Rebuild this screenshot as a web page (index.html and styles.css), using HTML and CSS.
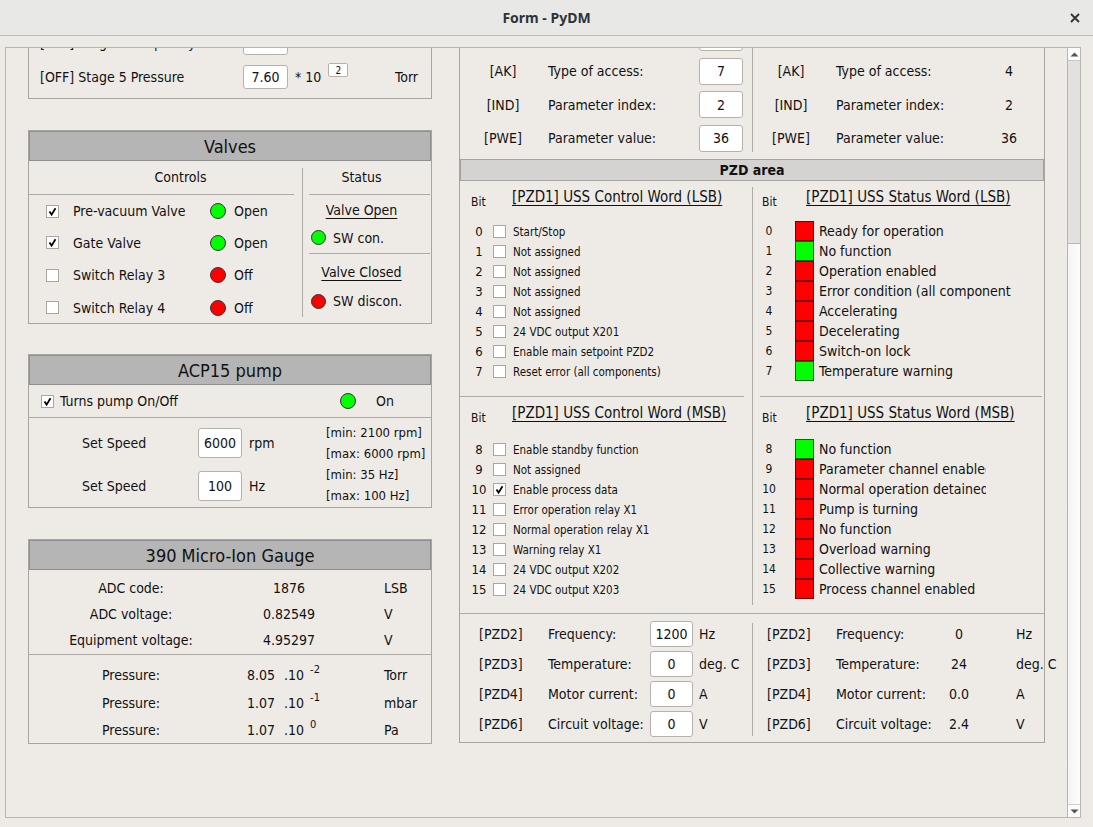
FILE: index.html
```html
<!DOCTYPE html>
<html>
<head>
<meta charset="utf-8">
<title>Form - PyDM</title>
<link rel="stylesheet" href="styles.css">
</head>
<body>
<div class="window">
  <header class="titlebar">
    <span></span>
    <span class="title">Form - PyDM</span>
    <span class="close"><svg width="10" height="10" viewBox="0 0 10 10"><path d="M1 1 L9 9 M9 1 L1 9" stroke="#2e3436" stroke-width="1.8" fill="none"/></svg></span>
  </header>
  <div class="wbody">
    <div class="scrollarea">
      <div class="viewport">
        <div class="content">
          <!-- LEFT COLUMN -->
          <div class="col-left">
            <div class="box stage">
              <div class="stage-row"><span class="st-lbl">[OFF] Stage 5 Frequency</span><span class="input st-in">500</span><span class="st-mult"></span><span class="st-unit">Hz</span></div>
              <div class="stage-row"><span class="st-lbl">[OFF] Stage 5 Pressure</span><span class="input st-in">7.60</span><span class="st-mult">* 10 <span class="exp">2</span></span><span class="st-unit">Torr</span></div>
            </div>

            <div class="box valves">
              <div class="ghead">Valves</div>
              <div class="valves-body">
                <div class="controls">
                  <div class="subhead sub-controls">Controls</div>
                  <div class="hr hr-controls"></div>
                  <div class="vgrid">
                    <span class="cb"><svg width="11" height="11" viewBox="0 0 11 11"><path d="M2.5 5.5 L4.6 8.6 L8.5 2.2" stroke="#000" stroke-width="1.8" fill="none"/></svg></span><span class="vlabel">Pre-vacuum Valve</span><span class="led green"></span><span class="vstate">Open</span>
                    <span class="cb"><svg width="11" height="11" viewBox="0 0 11 11"><path d="M2.5 5.5 L4.6 8.6 L8.5 2.2" stroke="#000" stroke-width="1.8" fill="none"/></svg></span><span class="vlabel">Gate Valve</span><span class="led green"></span><span class="vstate">Open</span>
                    <span class="cb"></span><span class="vlabel">Switch Relay 3</span><span class="led red"></span><span class="vstate">Off</span>
                    <span class="cb"></span><span class="vlabel">Switch Relay 4</span><span class="led red"></span><span class="vstate">Off</span>
                  </div>
                </div>
                <div class="vsep vsep-valves"></div>
                <div class="status">
                  <div class="subhead sub-status">Status</div>
                  <div class="hr hr-status"></div>
                  <div class="st-title st-open"><u>Valve Open</u></div>
                  <div class="st-led st-led1"><span class="led small green"></span><span>SW con.</span></div>
                  <div class="hr hr-status"></div>
                  <div class="st-title st-closed"><u>Valve Closed</u></div>
                  <div class="st-led st-led2"><span class="led small red"></span><span>SW discon.</span></div>
                </div>
              </div>
            </div>

            <div class="box acp">
              <div class="ghead">ACP15 pump</div>
              <div class="acp-top">
                <span class="cb"><svg width="11" height="11" viewBox="0 0 11 11"><path d="M2.5 5.5 L4.6 8.6 L8.5 2.2" stroke="#000" stroke-width="1.8" fill="none"/></svg></span>
                <span class="acp-lbl">Turns pump On/Off</span>
                <span class="led green"></span>
                <span class="acp-on">On</span>
              </div>
              <div class="hr"></div>
              <div class="acp-speed">
                <div class="speed-grid">
                  <span class="sp-lbl">Set Speed</span><span class="input sp-in">6000</span><span class="sp-unit">rpm</span>
                  <span class="sp-lbl">Set Speed</span><span class="input sp-in">100</span><span class="sp-unit">Hz</span>
                </div>
                <div class="limits">
                  <div>[min: 2100 rpm]</div>
                  <div>[max: 6000 rpm]</div>
                  <div>[min: 35 Hz]</div>
                  <div>[max: 100 Hz]</div>
                </div>
              </div>
            </div>

            <div class="box gauge">
              <div class="ghead">390 Micro-Ion Gauge</div>
              <div class="g-rows g-top">
                <span class="g-lbl">ADC code:</span><span class="g-val">1876</span><span class="g-unit">LSB</span>
                <span class="g-lbl">ADC voltage:</span><span class="g-val">0.82549</span><span class="g-unit">V</span>
                <span class="g-lbl">Equipment voltage:</span><span class="g-val">4.95297</span><span class="g-unit">V</span>
              </div>
              <div class="hr"></div>
              <div class="g-rows g-press">
                <span class="g-lbl">Pressure:</span><span class="g-pv"><span>8.05</span><span class="dot10">.10</span><span class="sup">-2</span></span><span class="g-unit">Torr</span>
                <span class="g-lbl">Pressure:</span><span class="g-pv"><span>1.07</span><span class="dot10">.10</span><span class="sup">-1</span></span><span class="g-unit">mbar</span>
                <span class="g-lbl">Pressure:</span><span class="g-pv"><span>1.07</span><span class="dot10">.10</span><span class="sup">0</span></span><span class="g-unit">Pa</span>
              </div>
            </div>
          </div>

          <!-- RIGHT COLUMN -->
          <div class="col-right">
            <div class="box rbox">
              <div class="params">
                <div class="phalf pleft">
                  <span class="p-tag">[PNU]</span><span class="p-lbl">Parameter number:</span><span class="input p-in">1</span>
                  <span class="p-tag">[AK]</span><span class="p-lbl">Type of access:</span><span class="input p-in">7</span>
                  <span class="p-tag">[IND]</span><span class="p-lbl">Parameter index:</span><span class="input p-in">2</span>
                  <span class="p-tag">[PWE]</span><span class="p-lbl">Parameter value:</span><span class="input p-in">36</span>
                </div>
                <div class="vsep psep"></div>
                <div class="phalf pright">
                  <span class="p-tag">[PNU]</span><span class="p-lbl">Parameter number:</span><span class="p-val">1</span>
                  <span class="p-tag">[AK]</span><span class="p-lbl">Type of access:</span><span class="p-val">4</span>
                  <span class="p-tag">[IND]</span><span class="p-lbl">Parameter index:</span><span class="p-val">2</span>
                  <span class="p-tag">[PWE]</span><span class="p-lbl">Parameter value:</span><span class="p-val">36</span>
                </div>
              </div>

              <div class="pzd-head">PZD area</div>

              <div class="pzd-body">
                <div class="pzd-half pzd-left">
                  <div class="pzd-sec sec-lsb">
                    <div class="pzd-h"><span class="bit">Bit</span><span class="pzd-title">[PZD1] USS Control Word (LSB)</span></div>
                    <div class="crow"><span class="cn">0</span><span class="cb"></span><span class="cl">Start/Stop</span></div>
                    <div class="crow"><span class="cn">1</span><span class="cb"></span><span class="cl">Not assigned</span></div>
                    <div class="crow"><span class="cn">2</span><span class="cb"></span><span class="cl">Not assigned</span></div>
                    <div class="crow"><span class="cn">3</span><span class="cb"></span><span class="cl">Not assigned</span></div>
                    <div class="crow"><span class="cn">4</span><span class="cb"></span><span class="cl">Not assigned</span></div>
                    <div class="crow"><span class="cn">5</span><span class="cb"></span><span class="cl">24 VDC output X201</span></div>
                    <div class="crow"><span class="cn">6</span><span class="cb"></span><span class="cl">Enable main setpoint PZD2</span></div>
                    <div class="crow"><span class="cn">7</span><span class="cb"></span><span class="cl">Reset error (all components)</span></div>
                  </div>
                  <div class="hr hr-pl"></div>
                  <div class="pzd-sec sec-msb">
                    <div class="pzd-h"><span class="bit">Bit</span><span class="pzd-title">[PZD1] USS Control Word (MSB)</span></div>
                    <div class="crow"><span class="cn">8</span><span class="cb"></span><span class="cl">Enable standby function</span></div>
                    <div class="crow"><span class="cn">9</span><span class="cb"></span><span class="cl">Not assigned</span></div>
                    <div class="crow"><span class="cn">10</span><span class="cb"><svg width="11" height="11" viewBox="0 0 11 11"><path d="M2.5 5.5 L4.6 8.6 L8.5 2.2" stroke="#000" stroke-width="1.8" fill="none"/></svg></span><span class="cl">Enable process data</span></div>
                    <div class="crow"><span class="cn">11</span><span class="cb"></span><span class="cl">Error operation relay X1</span></div>
                    <div class="crow"><span class="cn">12</span><span class="cb"></span><span class="cl">Normal operation relay X1</span></div>
                    <div class="crow"><span class="cn">13</span><span class="cb"></span><span class="cl">Warning relay X1</span></div>
                    <div class="crow"><span class="cn">14</span><span class="cb"></span><span class="cl">24 VDC output X202</span></div>
                    <div class="crow"><span class="cn">15</span><span class="cb"></span><span class="cl">24 VDC output X203</span></div>
                  </div>
                </div>
                <div class="vsep pzd-sep"></div>
                <div class="pzd-half pzd-right">
                  <div class="pzd-sec sec-lsb">
                    <div class="pzd-h"><span class="bit">Bit</span><span class="pzd-title">[PZD1] USS Status Word (LSB)</span></div>
                    <div class="srow"><span class="sn">0</span><span class="sq red"></span><span class="sl">Ready for operation</span></div>
                    <div class="srow"><span class="sn">1</span><span class="sq green"></span><span class="sl">No function</span></div>
                    <div class="srow"><span class="sn">2</span><span class="sq red"></span><span class="sl">Operation enabled</span></div>
                    <div class="srow"><span class="sn">3</span><span class="sq red"></span><span class="sl">Error condition (all components)</span></div>
                    <div class="srow"><span class="sn">4</span><span class="sq red"></span><span class="sl">Accelerating</span></div>
                    <div class="srow"><span class="sn">5</span><span class="sq red"></span><span class="sl">Decelerating</span></div>
                    <div class="srow"><span class="sn">6</span><span class="sq red"></span><span class="sl">Switch-on lock</span></div>
                    <div class="srow"><span class="sn">7</span><span class="sq green"></span><span class="sl">Temperature warning</span></div>
                  </div>
                  <div class="hr hr-pr"></div>
                  <div class="pzd-sec sec-msb">
                    <div class="pzd-h"><span class="bit">Bit</span><span class="pzd-title">[PZD1] USS Status Word (MSB)</span></div>
                    <div class="srow msb"><span class="sn">8</span><span class="sq green"></span><span class="sl">No function</span></div>
                    <div class="srow msb"><span class="sn">9</span><span class="sq red"></span><span class="sl">Parameter channel enabled</span></div>
                    <div class="srow msb"><span class="sn">10</span><span class="sq red"></span><span class="sl">Normal operation detained</span></div>
                    <div class="srow msb"><span class="sn">11</span><span class="sq red"></span><span class="sl">Pump is turning</span></div>
                    <div class="srow msb"><span class="sn">12</span><span class="sq red"></span><span class="sl">No function</span></div>
                    <div class="srow msb"><span class="sn">13</span><span class="sq red"></span><span class="sl">Overload warning</span></div>
                    <div class="srow msb"><span class="sn">14</span><span class="sq red"></span><span class="sl">Collective warning</span></div>
                    <div class="srow msb"><span class="sn">15</span><span class="sq red"></span><span class="sl">Process channel enabled</span></div>
                  </div>
                </div>
              </div>

              <div class="hr"></div>

              <div class="pzd-bottom">
                <div class="pb-half pb-left">
                  <span class="pb-tag">[PZD2]</span><span class="pb-lbl">Frequency:</span><span class="input pb-in">1200</span><span class="pb-unit">Hz</span>
                  <span class="pb-tag">[PZD3]</span><span class="pb-lbl">Temperature:</span><span class="input pb-in">0</span><span class="pb-unit">deg. C</span>
                  <span class="pb-tag">[PZD4]</span><span class="pb-lbl">Motor current:</span><span class="input pb-in">0</span><span class="pb-unit">A</span>
                  <span class="pb-tag">[PZD6]</span><span class="pb-lbl">Circuit voltage:</span><span class="input pb-in">0</span><span class="pb-unit">V</span>
                </div>
                <div class="vsep pb-sep"></div>
                <div class="pb-half pb-right">
                  <span class="pb-tag">[PZD2]</span><span class="pb-lbl">Frequency:</span><span class="pb-val">0</span><span class="pb-unit">Hz</span>
                  <span class="pb-tag">[PZD3]</span><span class="pb-lbl">Temperature:</span><span class="pb-val">24</span><span class="pb-unit">deg. C</span>
                  <span class="pb-tag">[PZD4]</span><span class="pb-lbl">Motor current:</span><span class="pb-val">0.0</span><span class="pb-unit">A</span>
                  <span class="pb-tag">[PZD6]</span><span class="pb-lbl">Circuit voltage:</span><span class="pb-val">2.4</span><span class="pb-unit">V</span>
                </div>
              </div>
            </div>
          </div>
        </div>
      </div>
      <div class="vscroll">
        <div class="sb-btn"><svg width="9" height="5" viewBox="0 0 9 5"><path d="M0.5 4.5 L4.5 0.5 L8.5 4.5 Z" fill="#555"/></svg></div>
        <div class="sb-trough">
          <div class="sb-handle"></div>
        </div>
        <div class="sb-btn sb-down"><svg width="9" height="5" viewBox="0 0 9 5"><path d="M0.5 0.5 L4.5 4.5 L8.5 0.5 Z" fill="#555"/></svg></div>
      </div>
    </div>
  </div>
</div>
</body>
</html>
```

FILE: styles.css
```css
* { box-sizing: border-box; }
html, body { margin: 0; padding: 0; }
body {
  width: 1093px;
  height: 827px;
  overflow: hidden;
  background: #eeebe7;
  font-family: "DejaVu Sans Condensed", "DejaVu Sans", sans-serif;
  font-size: 14px;
  color: #111;
}
.window { width: 1093px; height: 827px; display: flex; flex-direction: column; }

/* title bar */
.titlebar {
  height: 36px;
  flex: none;
  background: #e8e8e7;
  border-bottom: 1px solid #bdbcb9;
  display: grid;
  grid-template-columns: 1fr auto 1fr;
  align-items: center;
}
.title { font-family: "Noto Sans", sans-serif; font-weight: bold; font-size: 14px; color: #2e3436; }
.close { justify-self: end; margin-right: 13px; display: flex; }

.wbody { flex: 1; padding: 11px 12px 9px 5px; }
.scrollarea {
  height: 771px;
  border: 1px solid #b9b6b1;
  display: flex;
}
.viewport { flex: 1; overflow: hidden; }
.content {
  display: flex;
  align-items: flex-start;
  gap: 27px;
  padding-left: 22px;
  margin-top: -29px;
}

/* scrollbar */
.vscroll { width: 13px; flex: none; display: flex; flex-direction: column; border-left: 1px solid #b5b5b5; background: #fafafa; }
.sb-btn { height: 13px; display: flex; align-items: center; justify-content: center; background: #fbfbfb; border-bottom: 1px solid #c8c8c8; }
.sb-down { border-bottom: none; border-top: 1px solid #d0d0d0; }
.sb-trough { flex: 1; background: linear-gradient(to right, #f4f4f4, #fdfdfd); }
.sb-handle { height: 183px; background: #e2e1df; border-bottom: 1px solid #b8b8b8; }

/* generic */
.box { border: 1px solid #a8a5a1; }
.hr { height: 1px; background: #aeaba7; }
.vsep { width: 1px; background: #aeaba7; flex: none; }
.input {
  background: #fff;
  border: 1px solid #b5b2ad;
  border-radius: 3px;
  display: flex;
  align-items: center;
  justify-content: center;
  font-size: 14px;
}
.cb {
  width: 13px; height: 13px;
  background: #fff;
  border: 1px solid #a9a7a3;
  display: flex; align-items: center; justify-content: center;
}
.led { width: 16px; height: 16px; border-radius: 50%; border: 1px solid #333; }
.led.small { width: 15px; height: 15px; }
.led.green { background: #00ff00; }
.led.red { background: #ff0000; }
.ghead {
  height: 30px;
  background: #b5b5b5;
  border: 1px solid #8f8f8f;
  display: flex; align-items: center; justify-content: center;
  font-size: 18px;
  color: #111;
}

/* left column */
.col-left { width: 404px; flex: none; }
.stage { padding: 6px 0 4px; }
.stage-row {
  height: 34px;
  display: grid;
  grid-template-columns: 203px 45px 98px 1fr;
  align-items: center;
  padding-left: 11px;
}
.st-in { height: 24px; }
.st-mult { padding-left: 7px; display: flex; align-items: center; }
.exp {
  margin-left: 7px;
  margin-bottom: 14px;
  width: 20px; height: 14px;
  background: #fff; border: 1px solid #b5b2ad; border-radius: 2px;
  font-size: 10px; display: flex; align-items: center; justify-content: center;
}
.st-unit { text-align: right; padding-right: 13px; }

.valves { margin-top: 31px; }
.valves-body { display: flex; }
.controls { flex: 1; }
.subhead { height: 33px; display: flex; align-items: center; justify-content: center; padding-bottom: 1px; }
.sub-controls { padding-left: 30px; }
.hr-controls { margin-right: 8px; }
.vgrid {
  display: grid;
  grid-template-columns: 13px 151px 16px 1fr;
  grid-template-rows: 32px 31px 34px 31px;
  align-items: center;
  padding-left: 17px;
}
.vlabel { padding-left: 14px; }
.vstate { padding-left: 8px; }
.vsep-valves { margin: 7px 0 6px; }
.status { width: 128px; flex: none; }
.sub-status { padding-right: 11px; }
.hr-status { margin-left: 6px; margin-right: 1px; }
.st-title { display: flex; align-items: center; justify-content: center; padding-right: 11px; }
.st-title u { text-underline-offset: 3px; }
.st-open { height: 30px; }
.st-closed { height: 35px; }
.st-led { display: flex; align-items: center; gap: 7px; padding-left: 8px; }
.st-led1 { height: 25px; margin-bottom: 3px; }
.st-led2 { height: 24px; }

.acp { margin-top: 30px; }
.acp-top {
  height: 32px;
  display: grid;
  grid-template-columns: 13px 286px 16px 1fr;
  align-items: center;
  padding-left: 12px;
}
.acp-lbl { padding-left: 6px; }
.acp-on { padding-left: 20px; }
.acp-speed { display: flex; height: 89px; }
.speed-grid {
  width: 297px;
  display: grid;
  grid-template-columns: 116px 44px 1fr;
  grid-template-rows: 43px 43px;
  align-items: center;
  padding-left: 53px;
  padding-top: 3px;
}
.sp-in { height: 30px; }
.sp-unit { padding-left: 7px; }
.limits { padding-top: 4px; font-size: 13px; }
.limits div { height: 21px; line-height: 21px; }

.gauge { margin-top: 31px; }
.g-rows {
  display: grid;
  grid-template-columns: 204px 112px 1fr;
  align-items: center;
}
.g-top { grid-template-rows: 26px 26px 26px; padding: 5px 0 1px; }
.g-press { grid-template-rows: 28px 28px 26px; padding-top: 6px; }
.g-lbl { text-align: center; }
.g-val { text-align: center; }
.g-unit { padding-left: 39px; }
.g-pv { padding-left: 14px; display: flex; align-items: center; }
.dot10 { margin-left: 9px; }
.sup { font-size: 11px; margin-left: 6px; margin-bottom: 12px; }

/* right column */
.col-right { width: 586px; flex: none; }
.params { display: flex; height: 134px; margin-bottom: 5px; }
.phalf { display: grid; grid-template-rows: repeat(4, 33.5px); align-items: center; padding-top: 1px; }
.pleft { width: 292px; grid-template-columns: 86px 153px 44px; }
.pright { width: 291px; grid-template-columns: 76px 151px 58px; }
.p-tag { text-align: center; }
.pleft .p-lbl { padding-left: 2px; }
.pright .p-lbl { padding-left: 7px; }
.p-in { height: 27px; }
.p-val { text-align: center; }
.psep { margin-bottom: 2px; }

.pzd-head {
  height: 22px;
  background: #d4d3d2;
  border: 1px solid #a5a3a0;
  display: flex; align-items: center; justify-content: center;
  font-weight: bold;
  font-size: 14px;
}
.pzd-body { display: flex; height: 432px; }
.pzd-half { flex: none; }
.pzd-left { width: 292px; }
.pzd-right { width: 291px; }
.pzd-sep { margin-top: 6px; height: 418px; }
.sec-lsb { height: 215px; }
.sec-msb { height: 216px; }
.pzd-h { display: flex; height: 40px; padding-top: 6px; }
.sec-msb .pzd-h { height: 42px; }
.bit { font-size: 12px; padding-top: 8px; flex: none; }
.pzd-left .bit { width: 52px; padding-left: 11px; }
.pzd-right .bit { width: 53px; padding-left: 9px; }
.pzd-title { text-decoration: underline; text-underline-offset: 3px; font-size: 15px; line-height: 20px; white-space: nowrap; }
.hr-pl { margin-right: 8px; }
.hr-pr { margin-left: 7px; margin-right: 2px; }

.crow { height: 20px; display: flex; align-items: center; padding-left: 7px; padding-top: 1px; }
.cn { width: 24px; text-align: center; font-size: 13px; }
.crow .cb { margin-left: 2px; }
.cl { padding-left: 7px; font-size: 11.5px; white-space: nowrap; }

.srow { height: 20px; display: flex; align-items: center; padding-left: 4px; }
.sn { width: 24px; text-align: center; font-size: 12px; }
.sq { width: 19px; height: 20px; margin-left: 14px; border: 1px solid #7a0000; flex: none; }
.sq.red { background: #ff0000; }
.sq.green { background: #00ff00; border-color: #0a6a0a; }
.sl { padding-left: 5px; width: 197px; white-space: nowrap; overflow: hidden; }
.srow.msb .sl { width: 172px; }

.pzd-bottom { display: flex; height: 128px; }
.pb-half { display: grid; grid-template-rows: repeat(4, 30px); align-items: center; padding-top: 5px; flex: none; white-space: nowrap; }
.pb-left { width: 292px; padding-left: 19px; grid-template-columns: 69px 102px 43px 1fr; }
.pb-right { width: 291px; padding-left: 14px; grid-template-columns: 69px 100px 46px 1fr; }
.pb-in { height: 26px; }
.pb-left .pb-unit { padding-left: 6px; }
.pb-val { text-align: center; }
.pb-right .pb-unit { padding-left: 34px; }
.pb-sep { margin-top: 9px; height: 113px; }
```
